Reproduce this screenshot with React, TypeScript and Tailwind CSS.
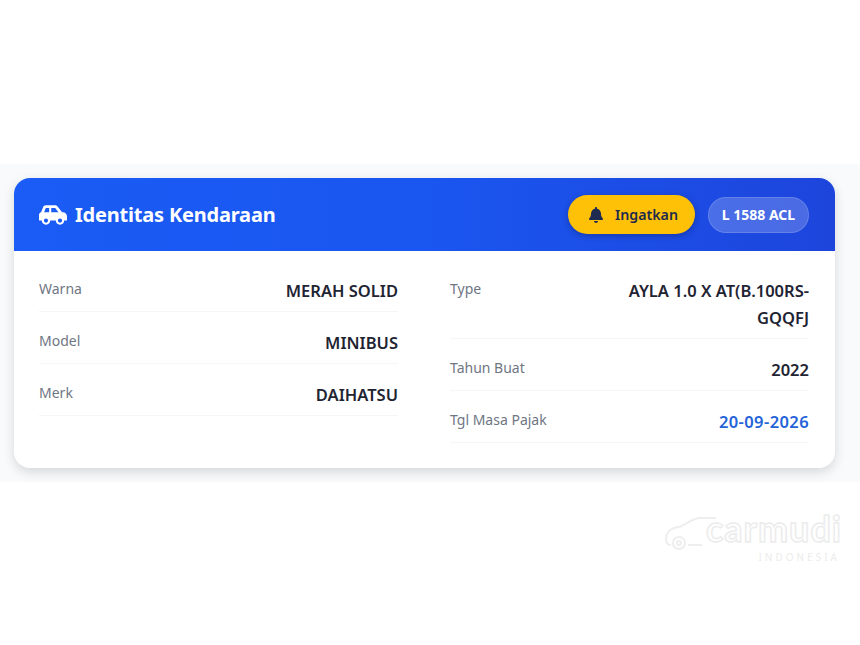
import { FaBell, FaCarSide } from "react-icons/fa";

const leftRows = [
  { label: "Warna", value: "MERAH SOLID" },
  { label: "Model", value: "MINIBUS" },
  { label: "Merk", value: "DAIHATSU" },
];

const rightRows = [
  { label: "Type", value: "AYLA 1.0 X AT(B.100RS-GQQFJ" },
  { label: "Tahun Buat", value: "2022" },
  { label: "Tgl Masa Pajak", value: "20-09-2026", accent: true },
];

function InfoRow({ label, value, accent }: { label: string; value: string; accent?: boolean }) {
  return (
    <div className="flex items-start justify-between border-b border-[#f5f6f8] pt-[10px] pb-[7px]">
      <span className="text-[14px] leading-[23px] text-[#6f7683]">{label}</span>
      <span
        className={`w-[190px] text-right text-[16.5px] leading-[27px] font-semibold ${
          accent ? "text-[#2563d9] tracking-[0.4px]" : "text-[#1f2433]"
        }`}
      >
        {value}
      </span>
    </div>
  );
}

export default function App() {
  return (
    <div className="h-[645px] overflow-hidden bg-white font-['Noto_Sans',sans-serif]">
      <div className="h-[164px]" />
      <section className="h-[318px] bg-[#f8fafc] pt-[14px] pr-[25px] pl-[14px]">
        <div className="h-[290px] overflow-hidden rounded-[16px] bg-white shadow-[0_4px_12px_rgba(0,0,0,0.14)]">
          <header className="flex h-[73px] items-center justify-between bg-gradient-to-r from-[#1a5cf5] via-[#1a56f0] to-[#1d45dc] pr-[26px] pl-[25px]">
            <div className="flex items-center gap-[8px] text-white">
              <FaCarSide className="h-[28px] w-[28px]" />
              <h2 className="text-[20px] font-bold tracking-[-0.2px]">Identitas Kendaraan</h2>
            </div>
            <div className="flex items-center gap-[13px]">
              <button className="flex h-[39px] w-[127px] items-center justify-center gap-[11px] rounded-full bg-[#ffc107] pl-[3px] text-[14.2px] font-semibold text-[#1e2a4f] shadow-[0_2px_6px_rgba(0,0,0,0.25)]">
                <FaBell className="h-[16px] w-[16px]" />
                Ingatkan
              </button>
              <span className="flex h-[36px] w-[101px] items-center justify-center rounded-full border border-white/15 bg-white/20 text-[14px] font-bold text-white">
                L 1588 ACL
              </span>
            </div>
          </header>
          <div className="grid grid-cols-2 gap-[52px] pt-[16px] pr-[26px] pl-[25px]">
            <div className="flex flex-col gap-[7px]">
              {leftRows.map((row) => (
                <InfoRow key={row.label} {...row} />
              ))}
            </div>
            <div className="flex flex-col gap-[7px]">
              {rightRows.map((row) => (
                <InfoRow key={row.label} {...row} />
              ))}
            </div>
          </div>
        </div>
      </section>
      <div className="flex justify-end pt-[24px] pr-[18px]">
        <div className="flex items-start">
          <svg viewBox="0 0 60 34" className="mt-[10px] -mr-[18px] h-[34px] w-[60px]" fill="none" stroke="#eeeeee" strokeWidth="2">
            <path d="M52 2H36C28 2 22 9 15 11C7 12 2 16 2 23C2 27 4 29 7 29" />
            <path d="M24 29H38" />
            <circle cx="15" cy="27" r="6" />
            <circle cx="15" cy="27" r="2" />
          </svg>
          <div className="flex flex-col items-end">
            <span className="text-[36px] leading-[44px] font-bold tracking-[1px] text-white font-['Lato',sans-serif] [-webkit-text-stroke:1.5px_#ececec]">
              carmudi
            </span>
            <span className="mr-[2px] text-[10px] leading-[14px] tracking-[3px] text-[#ececec]">INDONESIA</span>
          </div>
        </div>
      </div>
    </div>
  );
}
